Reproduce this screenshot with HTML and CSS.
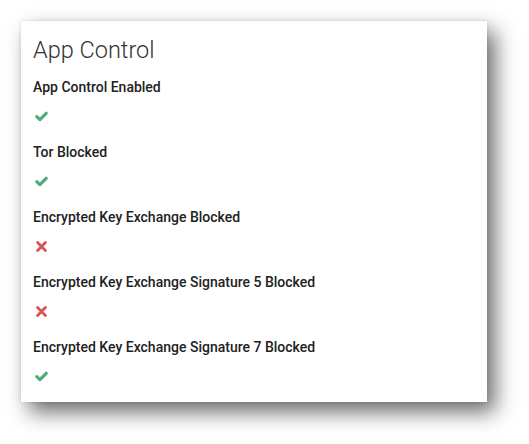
FILE: index.html
```html
<!DOCTYPE html>
<html>
<head>
<meta charset="utf-8">
<link rel="stylesheet" href="styles.css">
</head>
<body>
<div class="card">
  <h2 class="title">App Control</h2>
  <div class="item">
    <div class="label">App Control Enabled</div>
    <div class="icon"><svg class="ok" width="13" height="11" viewBox="0 0 13 11"><polyline points="1.8,5.6 4.9,8.6 11.2,2.3"/></svg></div>
  </div>
  <div class="item">
    <div class="label">Tor Blocked</div>
    <div class="icon"><svg class="ok" width="13" height="11" viewBox="0 0 13 11"><polyline points="1.8,5.6 4.9,8.6 11.2,2.3"/></svg></div>
  </div>
  <div class="item">
    <div class="label">Encrypted Key Exchange Blocked</div>
    <div class="icon"><svg class="bad" width="13" height="11" viewBox="0 0 13 11"><path d="M2.6,1.6 L10.4,9.4 M10.4,1.6 L2.6,9.4"/></svg></div>
  </div>
  <div class="item">
    <div class="label">Encrypted Key Exchange Signature 5 Blocked</div>
    <div class="icon"><svg class="bad" width="13" height="11" viewBox="0 0 13 11"><path d="M2.6,1.6 L10.4,9.4 M10.4,1.6 L2.6,9.4"/></svg></div>
  </div>
  <div class="item">
    <div class="label">Encrypted Key Exchange Signature 7 Blocked</div>
    <div class="icon"><svg class="ok" width="13" height="11" viewBox="0 0 13 11"><polyline points="1.8,5.6 4.9,8.6 11.2,2.3"/></svg></div>
  </div>
</div>
</body>
</html>
```
FILE: styles.css
```css
html, body {
  margin: 0;
  padding: 0;
  background: #ffffff;
}
body {
  padding: 21px 42px 42px 21px;
  font-family: Roboto, "Liberation Sans", sans-serif;
}
.card {
  width: 466px;
  height: 381px;
  box-sizing: border-box;
  background: #fff;
  padding: 14px 12px 15px 12px;
  box-shadow: 8px 10px 20px rgba(0,0,0,0.58), 0 0 3px rgba(0,0,0,0.12);
  display: flex;
  flex-direction: column;
  gap: 16px;
}
.title {
  margin: 0 0 -4px 0;
  font-size: 23.5px;
  font-weight: 300;
  line-height: 30px;
  color: #333;
}
.item {
  display: flex;
  flex-direction: column;
  gap: 9px;
}
.label {
  font-size: 14px;
  font-weight: 500;
  line-height: 20px;
  color: #222;
}
.icon {
  height: 20px;
  display: flex;
  align-items: center;
  padding-left: 2px;
}
.ok polyline {
  fill: none;
  stroke: #4cae7a;
  stroke-width: 3.2;
  stroke-linecap: round;
  stroke-linejoin: round;
}
.bad path {
  fill: none;
  stroke: #d9534f;
  stroke-width: 2.8;
  stroke-linecap: round;
}
```
